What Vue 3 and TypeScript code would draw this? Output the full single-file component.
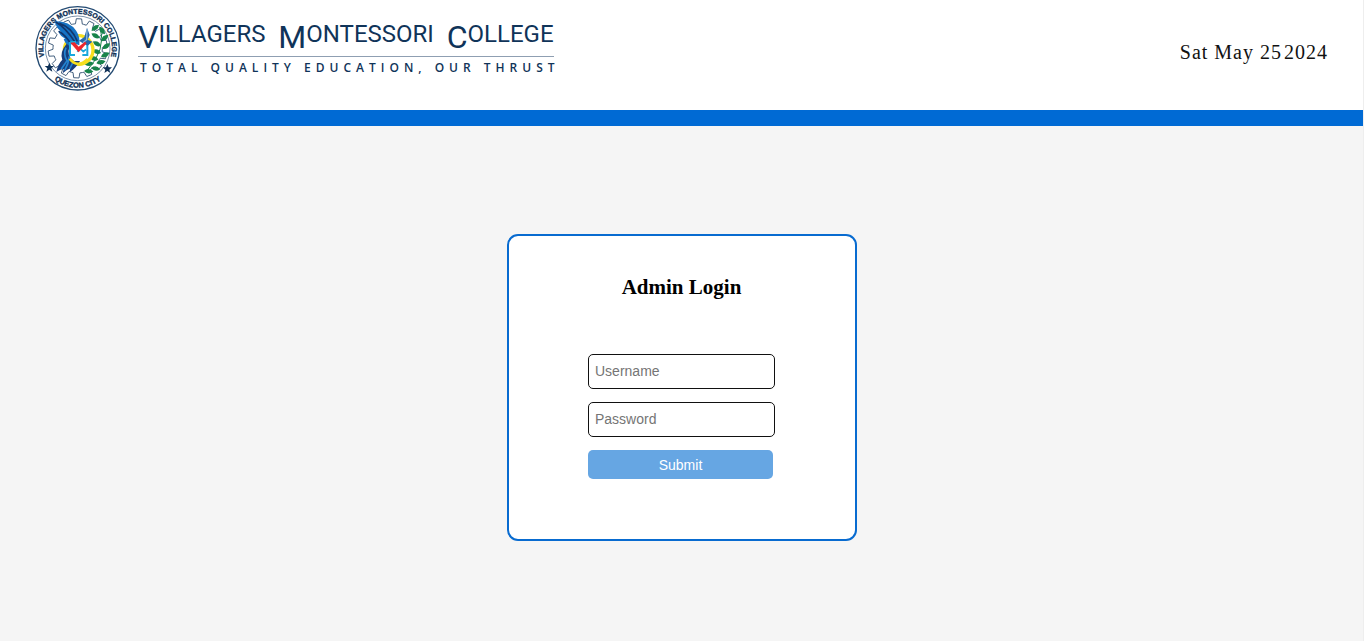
<script setup lang="ts">
import { computed, ref } from 'vue'

interface Leaf {
  x: number
  y: number
  angle: number
}

const username = ref('')
const password = ref('')

const today = { day: 'Sat May 25', year: '2024' }

const words = ['Villagers', 'Montessori', 'College']

const leaves: Leaf[] = [
  { x: 196, y: 84, angle: -35 },
  { x: 216, y: 92, angle: 55 },
  { x: 197, y: 107, angle: -150 },
  { x: 225, y: 114, angle: -40 },
  { x: 201, y: 131, angle: -150 },
  { x: 229, y: 139, angle: -35 },
  { x: 200, y: 154, angle: -160 },
  { x: 226, y: 165, angle: -25 },
  { x: 192, y: 175, angle: -165 },
  { x: 213, y: 187, angle: -10 },
  { x: 178, y: 191, angle: 175 },
  { x: 197, y: 206, angle: 10 },
  { x: 176, y: 214, angle: 5 },
]

const gearPath = computed<string>(() => {
  const teeth = 14
  const step = (Math.PI * 2) / teeth
  const profile: [number, number][] = [
    [0.05, 74],
    [0.3, 74],
    [0.4, 89],
    [0.8, 89],
    [0.92, 74],
  ]
  const points: string[] = []
  for (let i = 0; i < teeth; i++) {
    for (const [t, r] of profile) {
      const a = (i + t) * step
      points.push(`${(143 + r * Math.cos(a)).toFixed(1)} ${(145 + r * Math.sin(a)).toFixed(1)}`)
    }
  }
  return `M${points.join('L')}Z`
})
</script>

<template>
  <div class="page">
    <header class="header">
      <div class="brand">
        <svg class="seal" viewBox="0 0 288 288" role="img" aria-label="Villagers Montessori College seal">
          <defs>
            <path id="arc-top" d="M52.1 192.7A103 103 0 1 1 233.9 192.7" />
            <path id="arc-bottom" d="M45.8 212A118 118 0 0 0 240.2 212" />
          </defs>
          <circle cx="143" cy="145" r="125" fill="#fff" stroke="#234a72" stroke-width="4" />
          <circle cx="143" cy="145" r="97" fill="none" stroke="#3c5c7e" stroke-width="2" />
          <path :d="gearPath" fill="#fff" stroke="#45617f" stroke-width="3" />
          <g class="seal-text">
            <text font-size="21"><textPath href="#arc-top" startOffset="50%">VILLAGERS MONTESSORI COLLEGE</textPath></text>
            <text font-size="22"><textPath href="#arc-bottom" startOffset="50%">QUEZON CITY</textPath></text>
          </g>
          <path d="M58 188l4 10 10 0-8 7 3 10-9-6-9 6 3-10-8-7 10 0z" fill="#0d2f55" />
          <path d="M232 192l4 10 10 0-8 7 3 10-9-6-9 6 3-10-8-7 10 0z" fill="#0d2f55" />
          <path d="M211 83Q229 148 172 211" fill="none" stroke="#17834a" stroke-width="3" />
          <path
            v-for="(leaf, i) in leaves"
            :key="i"
            d="M-14 0Q-2-14 14-1Q0 13-14 0Z"
            fill="#17834a"
            :transform="`translate(${leaf.x} ${leaf.y}) rotate(${leaf.angle})`"
          />
          <circle cx="146" cy="150" r="43" fill="#fff" stroke="#f6df1e" stroke-width="10" />
          <path d="M74 63Q120 63 139 93Q151 111 148 136L129 129L118 139Q106 133 101 117L106 116Q91 110 85 94L93 95Q78 83 74 63Z" fill="#1673c4" />
          <path d="M77 66Q106 82 134 125M88 70Q126 82 142 124M86 94Q106 105 123 132" fill="none" stroke="#12366c" stroke-width="5" />
          <path d="M110 131Q88 157 97 179Q83 193 79 216Q93 207 101 207L98 220Q114 206 120 207L119 217Q140 202 150 183L132 183Q108 169 119 138Z" fill="#173d7b" />
          <path d="M108 143Q99 163 111 182L94 207M118 169Q116 190 104 211M130 184L119 207" fill="none" stroke="#2483d0" stroke-width="5" />
          <path d="M121 126H138M120 126V165H135M172 125V165H157" fill="none" stroke="#19a8dc" stroke-width="6" />
          <path d="M147 122L163 111L171 83L179 105L173 119L187 125L173 137L162 132Z" fill="#2769ad" />
          <path d="M171 88L170 119L159 128" fill="none" stroke="#8bb8dc" stroke-width="4" />
          <path d="M142 155L150 145L160 155L168 148" fill="none" stroke="#19a8dc" stroke-width="5" />
          <path d="M121 128L134 127L146 140L165 125L170 130L146 157Z" fill="#ed252c" />
          <path d="M119 176Q143 207 173 177" fill="none" stroke="#f6df1e" stroke-width="8" />
        </svg>
        <div class="wordmark">
          <div class="name">
            <span v-for="word in words" :key="word" class="word">
              <span class="initial">{{ word.charAt(0) }}</span><span class="rest">{{ word.slice(1) }}</span>
            </span>
          </div>
          <div class="tagline">TOTAL QUALITY EDUCATION, OUR THRUST</div>
        </div>
      </div>
      <time class="date" datetime="2024-05-25"><span>{{ today.day }}</span><span class="year">{{ today.year }}</span></time>
    </header>
    <main class="content">
      <form class="card" @submit.prevent>
        <h1 class="title">Admin Login</h1>
        <div class="fields">
          <input v-model="username" class="field" type="text" placeholder="Username" aria-label="Username" />
          <input v-model="password" class="field" type="password" placeholder="Password" aria-label="Password" />
          <button class="submit" type="submit">Submit</button>
        </div>
      </form>
    </main>
  </div>
</template>

<style>
body {
  margin: 0;
  background: #f5f5f5;
}
</style>

<style scoped>
.page {
  box-sizing: border-box;
  display: flex;
  flex-direction: column;
  min-height: 100vh;
  border-right: 1px solid #eeeeee;
  background: #f5f5f5;
}

.header {
  display: flex;
  justify-content: space-between;
  align-items: flex-start;
  padding: 0 35px 14px 30px;
  border-bottom: 16px solid #006ad4;
  background: #fff;
}

.brand {
  display: flex;
  align-items: flex-start;
}

.seal {
  display: block;
  width: 96px;
  height: 96px;
}

.seal-text {
  fill: #0d2f55;
  stroke: #0d2f55;
  stroke-width: 1;
  font-family: "Liberation Sans", Arial, sans-serif;
  font-weight: 700;
  text-anchor: middle;
}

.wordmark {
  padding: 20px 0 0 12px;
  color: #103459;
}

.name {
  display: flex;
  justify-content: space-between;
  gap: 12px;
  height: 36px;
  border-bottom: 1px solid #8f9fb2;
}

.word {
  display: flex;
  align-items: flex-start;
  text-transform: uppercase;
}

.initial {
  font: 32px/34px Roboto, sans-serif;
}

.rest {
  font: 24px/28px Roboto, sans-serif;
}

.tagline {
  margin-right: -6px;
  padding: 3px 0 0 2px;
  font: 600 12px/16px "Open Sans", sans-serif;
  letter-spacing: 5px;
  white-space: nowrap;
}

.date {
  display: flex;
  gap: 2px;
  padding-top: 40px;
  color: #111;
  font: 20px/24px "Liberation Serif", serif;
  letter-spacing: 1px;
  white-space: pre;
}

.content {
  display: flex;
  flex: 1;
  justify-content: center;
  align-items: flex-start;
  padding: 108px 16px 32px;
}

.card {
  box-sizing: border-box;
  width: 350px;
  padding: 38px 32px 60px;
  border: 2px solid #086bd0;
  border-radius: 11px;
  background: #fff;
}

.title {
  margin: 0 0 54px;
  color: #000;
  font: 700 21px/26px "Liberation Serif", serif;
  text-align: center;
}

.fields {
  display: flex;
  flex-direction: column;
  gap: 13px;
  width: 187px;
  margin: 0 auto;
}

.field {
  box-sizing: border-box;
  width: 100%;
  height: 35px;
  padding: 0 6px 1px;
  border: 1px solid #111;
  border-radius: 5px;
  background: #fff;
  color: #000;
  font: 14px/18px "Liberation Sans", Arial, sans-serif;
}

.field::placeholder {
  color: #757575;
  opacity: 1;
}

.submit {
  height: 29px;
  margin-right: 2px;
  padding: 0;
  border: 0;
  border-radius: 5px;
  background: #66a6e3;
  color: #fff;
  font: 14px/18px "Liberation Sans", Arial, sans-serif;
  cursor: pointer;
}
</style>
